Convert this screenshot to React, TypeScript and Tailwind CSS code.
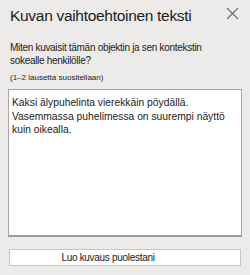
const App = () => {
  return (
    <div className="w-[250px] h-[275px] bg-[#edebe9] font-['Liberation_Sans',sans-serif] text-[#1b1b1b] overflow-hidden flex flex-col">
      <div className="flex items-start justify-between pl-[10px] pr-[11px] pt-[5px]">
        <h1 className="text-[15.5px] leading-[22px] tracking-[-0.3px]">Kuvan vaihtoehtoinen teksti</h1>
        <svg width="13" height="13" viewBox="0 0 13 13" className="mt-[2px]">
          <path d="M1 1 L12 12 M12 1 L1 12" stroke="#6b6b6b" strokeWidth="1.1" />
        </svg>
      </div>

      <p className="px-[10px] pr-[40px] mt-[14px] text-[10px] leading-[13px] tracking-[-0.3px]">
        Miten kuvaisit tämän objektin ja sen kontekstin sokealle henkilölle?
      </p>
      <p className="px-[10px] mt-[6px] text-[8px] leading-[10px]">(1–2 lausetta suositellaan)</p>

      <div className="mx-[8px] mt-[6px] h-[148px] shrink-0 bg-white border border-[#a6a6a6] border-b-2 border-b-[#9a9a9a] px-[3px] pt-[6px] text-[10.3px] leading-[13.5px]">
        Kaksi älypuhelinta vierekkäin pöydällä. Vasemmassa puhelimessa on suurempi näyttö kuin oikealla.
      </div>

      <button className="mx-[9px] mt-[12px] h-[17px] shrink-0 bg-white border border-[#c8c6c4] text-[10px] leading-[15px] tracking-[-0.3px] pr-[34px]">
        Luo kuvaus puolestani
      </button>
    </div>
  );
};

export default App;
